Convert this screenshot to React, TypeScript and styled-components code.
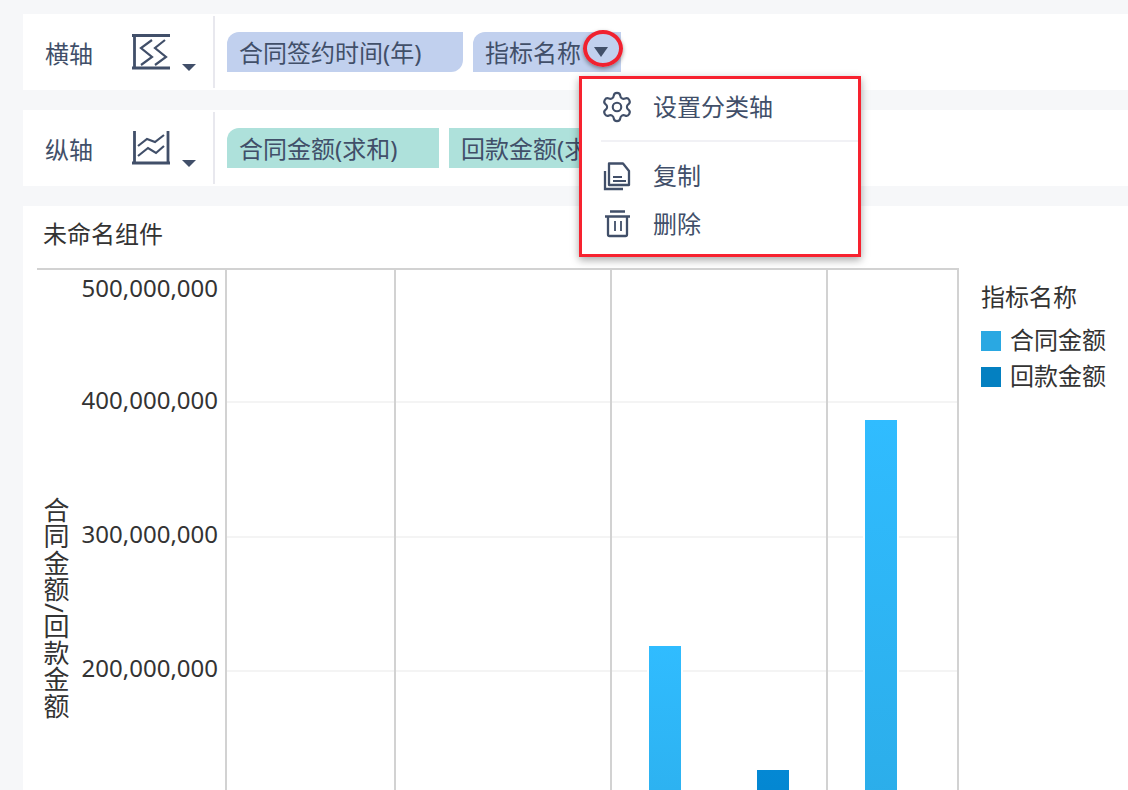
import { createGlobalStyle } from 'styled-components';
import styled from 'styled-components';
import { Settings } from 'lucide-react';

const GlobalStyle = createGlobalStyle`
  html, body {
    margin: 0;
    padding: 0;
    background: #f6f7f9;
    font-family: "Noto Sans", "Noto Sans CJK SC", sans-serif;
  }
`;

const SLATE = '#414f69';

const yLabels = [
  { text: '500,000,000', y: 297 },
  { text: '400,000,000', y: 409 },
  { text: '300,000,000', y: 543 },
  { text: '200,000,000', y: 677 },
];

const bars = [
  { x: 649, top: 646, fill: 'url(#barLight)' },
  { x: 757, top: 770, fill: 'url(#barDark)' },
  { x: 865, top: 420, fill: 'url(#barLight)' },
];

const HorizontalAxisIcon = () => (
  <svg width="66" height="40" viewBox="0 0 66 40" fill="none" stroke={SLATE} strokeWidth="2.2">
    <path d="M0 3.5H38M2.5 3V37M0 36H38" strokeWidth="2.8" />
    <path d="M20 8L9 16L20 25L9 33M33 8L23 16L34 25L23 33" />
    <path d="M50 32H64L57 39Z" fill={SLATE} stroke="none" />
  </svg>
);

const VerticalAxisIcon = () => (
  <svg width="66" height="40" viewBox="0 0 66 40" fill="none" stroke={SLATE} strokeWidth="2.2">
    <path d="M2.5 3V36M36 3V36M0 35H38" strokeWidth="2.8" />
    <path d="M6 18L15 11L23 14L32 7M6 28L16 20L24 25L32 18" />
    <path d="M50 32H64L57 39Z" fill={SLATE} stroke="none" />
  </svg>
);

const CopyIcon = () => (
  <svg width="30" height="30" viewBox="0 0 30 30" fill="none" stroke={SLATE} strokeWidth="2.3">
    <path d="M7 2.5H21L27 10V24H7Z" strokeLinejoin="round" />
    <path d="M3 10V28H21" />
    <path d="M11 16H20M11 20H24" strokeWidth="1.8" />
  </svg>
);

const TrashIcon = () => (
  <svg width="30" height="30" viewBox="0 0 30 30" fill="none" stroke={SLATE} strokeWidth="2.3">
    <path d="M8 2.5H23M3 7.5H28" />
    <path d="M6 7.5V25.5Q6 27 7.5 27H23.5Q25 27 25 25.5V7.5" strokeLinejoin="round" />
    <path d="M13 12V22M19 12V22" strokeWidth="1.8" />
  </svg>
);

export default function App() {
  return (
    <Page>
      <GlobalStyle />
      <AxisRow>
        <AxisLabel>横轴</AxisLabel>
        <AxisIcon>
          <HorizontalAxisIcon />
        </AxisIcon>
        <Divider />
        <Chips>
          <Chip $kind="dimension" $width={236} $radius="12px 0 12px 0">
            合同签约时间(年)
          </Chip>
          <Chip $kind="dimension" $width={148} $radius="12px 0 0 0">
            指标名称
            <Caret />
            <Marker />
          </Chip>
        </Chips>
      </AxisRow>
      <AxisRow>
        <AxisLabel>纵轴</AxisLabel>
        <AxisIcon>
          <VerticalAxisIcon />
        </AxisIcon>
        <Divider />
        <Chips>
          <Chip $kind="measure" $width={212} $radius="12px 0 0 0">
            合同金额(求和)
          </Chip>
          <Chip $kind="measure" $width={212} $radius="0">
            回款金额(求和)
          </Chip>
        </Chips>
      </AxisRow>
      <ChartPanel>
        <ChartTitle>未命名组件</ChartTitle>
        <ChartBody>
          <Plot width="922" height="522" viewBox="37 268 922 522">
            <defs>
              <linearGradient id="barLight" x1="0" y1="0" x2="0" y2="1">
                <stop offset="0" stopColor="#30bcff" />
                <stop offset="1" stopColor="#2aa8e2" />
              </linearGradient>
              <linearGradient id="barDark" x1="0" y1="0" x2="0" y2="1">
                <stop offset="0" stopColor="#0488d4" />
                <stop offset="1" stopColor="#0480c1" />
              </linearGradient>
            </defs>
            {[402, 537, 671].map((y) => (
              <line key={y} x1="227" x2="958" y1={y} y2={y} stroke="#f4f4f4" strokeWidth="2" />
            ))}
            <line x1="37" x2="959" y1="269" y2="269" stroke="#d2d2d2" strokeWidth="2" />
            {[226, 395, 611, 827, 958].map((x) => (
              <line key={x} x1={x} x2={x} y1="269" y2="790" stroke="#d2d2d2" strokeWidth="2" />
            ))}
            {bars.map((bar) => (
              <g key={bar.x}>
                <rect x={bar.x - 2} y={bar.top - 2} width="36" height={944 - bar.top} fill="#fff" />
                <rect x={bar.x} y={bar.top} width="32" height={940 - bar.top} fill={bar.fill} />
              </g>
            ))}
            {yLabels.map((label) => (
              <TickLabel key={label.text} x="218" y={label.y}>
                {label.text}
              </TickLabel>
            ))}
            <AxisTitle x="55" y="497">
              合同金额/回款金额
            </AxisTitle>
          </Plot>
          <Legend>
            <LegendTitle>指标名称</LegendTitle>
            <LegendItem>
              <Swatch $color="#2aa8e2" />
              <LegendLabel>合同金额</LegendLabel>
            </LegendItem>
            <LegendItem>
              <Swatch $color="#0480c1" />
              <LegendLabel>回款金额</LegendLabel>
            </LegendItem>
          </Legend>
        </ChartBody>
      </ChartPanel>
      <Menu>
        <MenuItem $height={56}>
          <GearIcon size={34} color={SLATE} strokeWidth={1.5} />
          <MenuLabel>设置分类轴</MenuLabel>
        </MenuItem>
        <MenuDivider />
        <MenuItem $height={48}>
          <CopyIcon />
          <MenuLabel>复制</MenuLabel>
        </MenuItem>
        <MenuItem $height={48}>
          <TrashIcon />
          <MenuLabel>删除</MenuLabel>
        </MenuItem>
      </Menu>
    </Page>
  );
}

const Page = styled.div`
  position: relative;
  height: 790px;
  box-sizing: border-box;
  padding: 14px 0 0 23px;
  overflow: hidden;
  background: #f6f7f9;
`;

const AxisRow = styled.div`
  display: flex;
  align-items: center;
  height: 76px;
  margin-bottom: 20px;
  padding-left: 22px;
  background: #fff;
`;

const AxisLabel = styled.div`
  width: 48px;
  font-size: 24px;
  color: ${SLATE};
  white-space: nowrap;
`;

const AxisIcon = styled.div`
  display: flex;
  margin-left: 39px;
`;

const Divider = styled.div`
  align-self: stretch;
  width: 2px;
  margin: 2px 0 2px 15px;
  background: #e8e8ee;
`;

const Chips = styled.div`
  display: flex;
  gap: 10px;
  margin-left: 12px;
`;

const Chip = styled.div<{ $kind: 'dimension' | 'measure'; $width: number; $radius: string }>`
  position: relative;
  display: flex;
  align-items: center;
  box-sizing: border-box;
  width: ${(p) => p.$width}px;
  height: 40px;
  padding: 0 0 2px 12px;
  border-radius: ${(p) => p.$radius};
  background: ${(p) => (p.$kind === 'dimension' ? '#c1d0ee' : '#aee1db')};
  font-size: 24px;
  color: ${SLATE};
  white-space: nowrap;
`;

const Caret = styled.span`
  width: 0;
  height: 0;
  margin: 2px 0 0 13px;
  border-style: solid;
  border-width: 10px 7px 0;
  border-color: ${SLATE} transparent transparent;
`;

const Marker = styled.span`
  position: absolute;
  left: 110px;
  top: -2px;
  box-sizing: border-box;
  width: 40px;
  height: 37px;
  border: 4px solid #f0212f;
  border-radius: 50%;
  box-shadow: 0 2px 4px rgba(0, 0, 0, 0.4);
`;

const ChartPanel = styled.div`
  background: #fff;
  height: 584px;
`;

const ChartTitle = styled.div`
  height: 51px;
  padding: 11px 0 0 20px;
  font-size: 24px;
  line-height: 34px;
  color: #333;
`;

const ChartBody = styled.div`
  display: flex;
  align-items: flex-start;
  padding-left: 14px;
`;

const Plot = styled.svg`
  flex: none;
  display: block;
`;

const TickLabel = styled.text`
  font-size: 24px;
  fill: #333;
  text-anchor: end;
`;

const AxisTitle = styled.text`
  font-size: 26px;
  letter-spacing: 0.5px;
  fill: #333;
  writing-mode: vertical-rl;
`;

const Legend = styled.div`
  margin-left: 22px;
  padding-top: 12px;
  font-size: 24px;
  color: #333;
`;

const LegendTitle = styled.div`
  height: 34px;
  line-height: 34px;
  margin-bottom: 9px;
`;

const LegendItem = styled.div`
  display: flex;
  align-items: center;
  gap: 9px;
  height: 36px;
  white-space: nowrap;
`;

const LegendLabel = styled.span`
  margin-bottom: 6px;
`;

const Swatch = styled.span<{ $color: string }>`
  width: 20px;
  height: 20px;
  background: ${(p) => p.$color};
`;

const Menu = styled.div`
  position: absolute;
  left: 579px;
  top: 76px;
  box-sizing: border-box;
  width: 282px;
  padding-bottom: 6px;
  border: 3px solid #f7222f;
  background: #fff;
  box-shadow: 0 3px 8px rgba(0, 0, 0, 0.35);
`;

const MenuItem = styled.div<{ $height: number }>`
  display: flex;
  align-items: center;
  gap: 21px;
  height: ${(p) => p.$height}px;
  padding-left: 20px;
  font-size: 24px;
  color: ${SLATE};
`;

const MenuLabel = styled.span`
  margin-bottom: 4px;
`;

const GearIcon = styled(Settings)`
  margin: 0 -2px;
`;

const MenuDivider = styled.div`
  height: 2px;
  margin: 5px 0 10px 19px;
  background: #f1f1f5;
`;
